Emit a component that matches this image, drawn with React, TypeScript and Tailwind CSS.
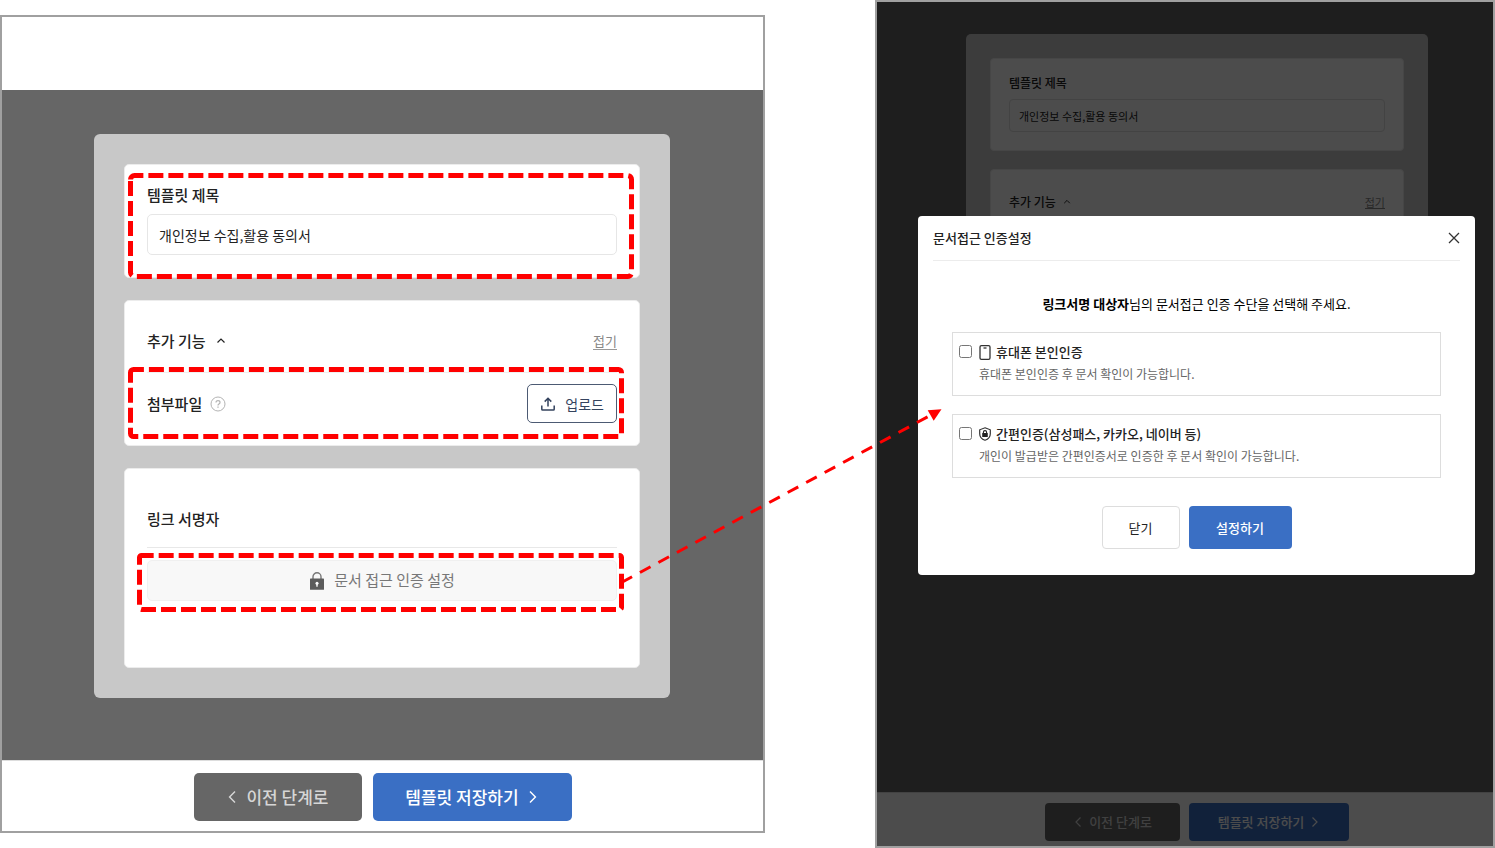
import { ReactNode, useState } from 'react';
import clsx from 'clsx';

function ChevronIcon({ direction, className }: { direction: 'up' | 'left' | 'right'; className?: string }) {
  const paths = {
    up: 'M1.5 6.5 L5 3 L8.5 6.5',
    left: 'M7.5 0.5 L3 5 L7.5 9.5',
    right: 'M2.5 0.5 L7 5 L2.5 9.5',
  };
  return (
    <svg viewBox="0 0 10 10" fill="none" stroke="currentColor" strokeWidth="1.2" className={className} aria-hidden="true">
      <path d={paths[direction]} />
    </svg>
  );
}

function UploadIcon() {
  return (
    <svg viewBox="0 0 16 16" fill="none" stroke="currentColor" strokeWidth="1.5" className="size-4" aria-hidden="true">
      <path d="M8 10.5 V2.5 M4.7 5.6 L8 2.3 L11.3 5.6" />
      <path d="M1.8 9.5 V13.2 Q1.8 14 2.6 14 H13.4 Q14.2 14 14.2 13.2 V9.5" />
    </svg>
  );
}

function LockIcon() {
  return (
    <svg viewBox="0 0 16 18" className="h-[18px] w-4" aria-hidden="true">
      <path d="M4 8 V4.8 A4 4 0 0 1 12 4.8 V8" fill="none" stroke="#777" strokeWidth="1.4" />
      <rect x="1" y="6.6" width="14" height="11.2" rx="0.6" fill="#5c5c5c" />
      <circle cx="8" cy="11.3" r="1.5" fill="#fff" />
      <rect x="7.3" y="11.5" width="1.4" height="3.2" fill="#fff" />
    </svg>
  );
}

function HelpIcon() {
  return (
    <svg viewBox="0 0 16 16" fill="none" stroke="currentColor" strokeWidth="1" className="size-4" aria-hidden="true">
      <circle cx="8" cy="8" r="7" />
      <path d="M6 6.6 Q6 4.7 8 4.7 Q10 4.7 10 6.4 Q10 7.4 8.9 8 Q8 8.5 8 9.6" strokeWidth="1.2" />
      <path d="M8 10.6 V11.8" strokeWidth="1.3" />
    </svg>
  );
}

function PhoneIcon() {
  return (
    <svg viewBox="0 0 12 15" fill="none" stroke="#333" className="h-[15px] w-3" aria-hidden="true">
      <rect x="1" y="0.7" width="10" height="13.6" rx="1.4" strokeWidth="1.3" />
      <path d="M4.5 3 H7.5" strokeWidth="1.3" />
    </svg>
  );
}

function ShieldIcon() {
  return (
    <svg viewBox="0 0 12 14" fill="none" className="h-[14px] w-3" aria-hidden="true">
      <path d="M6 0.8 L11.3 2.8 V6.8 C11.3 10 9 12.3 6 13.3 C3 12.3 0.7 10 0.7 6.8 V2.8 Z" stroke="#333" strokeWidth="1.2" />
      <rect x="3.2" y="6" width="5.6" height="4" rx="0.5" fill="#222" />
      <path d="M4.4 6.2 V5.2 A1.6 1.6 0 0 1 7.6 5.2 V6.2" stroke="#222" strokeWidth="1.1" />
    </svg>
  );
}

function CloseIcon() {
  return (
    <svg viewBox="0 0 12 12" fill="none" stroke="#333" strokeWidth="1.3" className="size-3" aria-hidden="true">
      <path d="M1 1 L11 11 M11 1 L1 11" />
    </svg>
  );
}

function TemplateForm() {
  const [title, setTitle] = useState('개인정보 수집,활용 동의서');

  return (
    <section className="mt-[15px] flex flex-col border-2 border-[#a0a0a0] bg-white">
      <div className="h-[73px]" />
      <div className="bg-[#666] pt-11 pr-[93px] pb-[62px] pl-[92px]">
        <div className="flex flex-col gap-[22px] rounded-md bg-[#c8c8c8] px-[30px] py-[30px]">
          <div className="rounded-[5px] border border-[#ececec] bg-white px-[22px] pt-[18px] pb-[22px]">
            <label htmlFor="template-title" className="block text-[15px] leading-6 font-medium">
              템플릿 제목
            </label>
            <input
              id="template-title"
              value={title}
              onChange={(e) => setTitle(e.target.value)}
              className="mt-[7px] h-[41px] w-full rounded-[5px] border border-[#e6e6e6] bg-white px-[11px] text-sm text-[#222]"
            />
          </div>

          <div className="rounded-[5px] border border-[#ececec] bg-white px-[22px] pt-7 pb-[22px]">
            <div className="flex items-center justify-between border-b border-[#f0f0f0] pb-[19px]">
              <button type="button" className="flex items-center gap-[10px] text-[15px] leading-6 font-medium">
                추가 기능
                <ChevronIcon direction="up" className="size-[10px]" />
              </button>
              <button type="button" className="border-b border-[#999] text-[13px] leading-4 text-[#888]">
                접기
              </button>
            </div>
            <div className="flex items-center justify-between pt-[11px]">
              <div className="flex items-center gap-2">
                <span className="text-[15px] leading-6 font-medium">첨부파일</span>
                <button type="button" aria-label="첨부파일 도움말" className="text-[#b4b4b4]">
                  <HelpIcon />
                </button>
              </div>
              <button
                type="button"
                className="flex h-[39px] items-center gap-[9px] rounded-[5px] border border-[#4c5a73] px-3 text-sm text-[#34435e]"
              >
                <UploadIcon />
                업로드
              </button>
            </div>
          </div>

          <div className="rounded-[5px] border border-[#ececec] bg-white px-[22px] pt-[38px] pb-[66px]">
            <h2 className="border-b border-[#e8e8e8] pb-4 text-[15px] leading-6 font-medium">링크 서명자</h2>
            <button
              type="button"
              className="mt-3 flex h-[41px] w-full items-center justify-center gap-[9px] rounded-[5px] border border-[#f0f0f0] bg-[#f8f8f8] text-[15px] text-[#777]"
            >
              <LockIcon />
              문서 접근 인증 설정
            </button>
          </div>
        </div>
      </div>
      <div className="flex justify-center gap-[11px] border-t border-[#ddd] pt-3 pb-[10px]">
        <button
          type="button"
          className="flex h-12 w-[168px] items-center justify-center gap-2 rounded-[5px] bg-[#666] text-[17px] font-medium text-[#d6d6d6]"
        >
          <ChevronIcon direction="left" className="size-3" />
          이전 단계로
        </button>
        <button
          type="button"
          className="flex h-12 w-[199px] items-center justify-center gap-2 rounded-[5px] bg-[#3a6fc4] text-[17px] font-medium text-white"
        >
          템플릿 저장하기
          <ChevronIcon direction="right" className="size-3" />
        </button>
      </div>
    </section>
  );
}

function AuthOption({ id, icon, title, description }: { id: string; icon: ReactNode; title: string; description: string }) {
  return (
    <div className="flex gap-[7px] border border-[#ddd] px-[6px] pt-[9px] pb-[11px]">
      <input id={id} type="checkbox" className="mt-[3px] size-[13px]" />
      <div>
        <label htmlFor={id} className="flex items-center gap-[5px] text-[13px] leading-5 font-medium text-[#222]">
          {icon}
          {title}
        </label>
        <p className="mt-[2px] text-xs leading-5 text-[#666]">{description}</p>
      </div>
    </div>
  );
}

function AuthDialog() {
  return (
    <div role="dialog" aria-labelledby="auth-title" className="w-full rounded bg-white px-[15px] pb-[26px]">
      <div className="flex h-[45px] items-center justify-between border-b border-[#ececec]">
        <h2 id="auth-title" className="text-[13px] leading-5 font-medium text-[#222]">
          문서접근 인증설정
        </h2>
        <button type="button" aria-label="닫기">
          <CloseIcon />
        </button>
      </div>
      <p className="mt-[33px] text-center text-[13px] leading-5 text-black">
        <strong className="font-bold">링크서명 대상자</strong>님의 문서접근 인증 수단을 선택해 주세요.
      </p>
      <div className="mt-[18px] flex flex-col gap-[18px] px-[19px]">
        <AuthOption
          id="auth-phone"
          icon={<PhoneIcon />}
          title="휴대폰 본인인증"
          description="휴대폰 본인인증 후 문서 확인이 가능합니다."
        />
        <AuthOption
          id="auth-simple"
          icon={<ShieldIcon />}
          title="간편인증(삼성패스, 카카오, 네이버 등)"
          description="개인이 발급받은 간편인증서로 인증한 후 문서 확인이 가능합니다."
        />
      </div>
      <div className="mt-7 flex justify-center gap-[9px]">
        <button type="button" className="h-[43px] w-[78px] rounded border border-[#ddd] bg-white text-[13px] text-[#222]">
          닫기
        </button>
        <button type="button" className="h-[43px] w-[103px] rounded bg-[#3a6fc4] text-[13px] font-medium text-white">
          설정하기
        </button>
      </div>
    </div>
  );
}

function DialogPreview() {
  return (
    <section className="relative flex min-h-screen flex-col border-2 border-[#a0a0a0] bg-white">
      <div className="flex-1 bg-[#666] pt-8 pr-[65px] pl-[89px]">
        <div className="flex flex-col gap-[18px] rounded-[5px] bg-[#c8c8c8] px-6 py-6">
          <div className="rounded border border-[#ececec] bg-white px-[18px] pt-[14px] pb-[18px]">
            <label htmlFor="preview-title" className="block text-xs leading-5 font-medium">
              템플릿 제목
            </label>
            <input
              id="preview-title"
              readOnly
              value="개인정보 수집,활용 동의서"
              className="mt-[6px] h-[33px] w-full rounded border border-[#e0e0e0] bg-white px-[9px] text-[11px] text-[#222]"
            />
          </div>
          <div className="rounded border border-[#ececec] bg-white px-[18px] pt-[22px] pb-40">
            <div className="flex items-center justify-between">
              <button type="button" className="flex items-center gap-[7px] text-xs leading-5 font-medium">
                추가 기능
                <ChevronIcon direction="up" className="size-2" />
              </button>
              <button type="button" className="border-b border-[#888] text-[11px] leading-3 text-[#888]">
                접기
              </button>
            </div>
          </div>
        </div>
      </div>
      <div className="flex justify-center gap-[9px] border-t border-[#ddd] pt-[10px] pb-[5px] pl-6">
        <button
          type="button"
          className="flex h-[38px] w-[135px] items-center justify-center gap-[6px] rounded bg-[#666] text-[13px] font-medium text-[#d6d6d6]"
        >
          <ChevronIcon direction="left" className="size-[10px]" />
          이전 단계로
        </button>
        <button
          type="button"
          className="flex h-[38px] w-[160px] items-center justify-center gap-[6px] rounded bg-[#3a6fc4] text-[13px] font-medium text-white"
        >
          템플릿 저장하기
          <ChevronIcon direction="right" className="size-[10px]" />
        </button>
      </div>
      <div className="absolute inset-0 flex items-start bg-black/70 pt-[214px] pr-[18px] pl-[41px]">
        <AuthDialog />
      </div>
    </section>
  );
}

const highlights = [
  { x1: 130.5, y1: 175.5, x2: 631.5, y2: 276.5, r: 4 },
  { x1: 130.5, y1: 369.5, x2: 621.5, y2: 436.5, r: 3 },
  { x1: 139.5, y1: 555.5, x2: 621.5, y2: 609.5, r: 2 },
];

// dashed frames and the arrow that leads to the dialog
function Annotations() {
  return (
    <svg
      viewBox="0 0 1495 848"
      fill="none"
      stroke="#f00"
      className="pointer-events-none absolute top-0 left-0 w-full"
      aria-hidden="true"
    >
      {highlights.map(({ x1, y1, x2, y2, r }) => (
        <path
          key={y1}
          strokeWidth="5"
          strokeDasharray="15 5"
          d={`M${x1} ${y1 + r} A${r} ${r} 0 0 1 ${x1 + r} ${y1} H${x2 - r} A${r} ${r} 0 0 1 ${x2} ${y1 + r} V${y2 - r} A${r} ${r} 0 0 1 ${x2 - r} ${y2} H${x1 + r} A${r} ${r} 0 0 1 ${x1} ${y2 - r} Z`}
        />
      ))}
      <path d="M621.5 582.5 L930 415.5" strokeWidth="3" strokeDasharray="12 9" />
      <path d="M941.5 409.3 L927.7 410.3 L933.7 420.7 Z" fill="#f00" stroke="none" />
    </svg>
  );
}

export default function App() {
  return (
    <main
      className={clsx(
        'relative grid grid-cols-[765fr_620fr] items-start gap-[110px] bg-white text-[#222]',
        "font-['Noto_Sans_CJK_KR',sans-serif]"
      )}
    >
      <TemplateForm />
      <DialogPreview />
      <Annotations />
    </main>
  );
}
